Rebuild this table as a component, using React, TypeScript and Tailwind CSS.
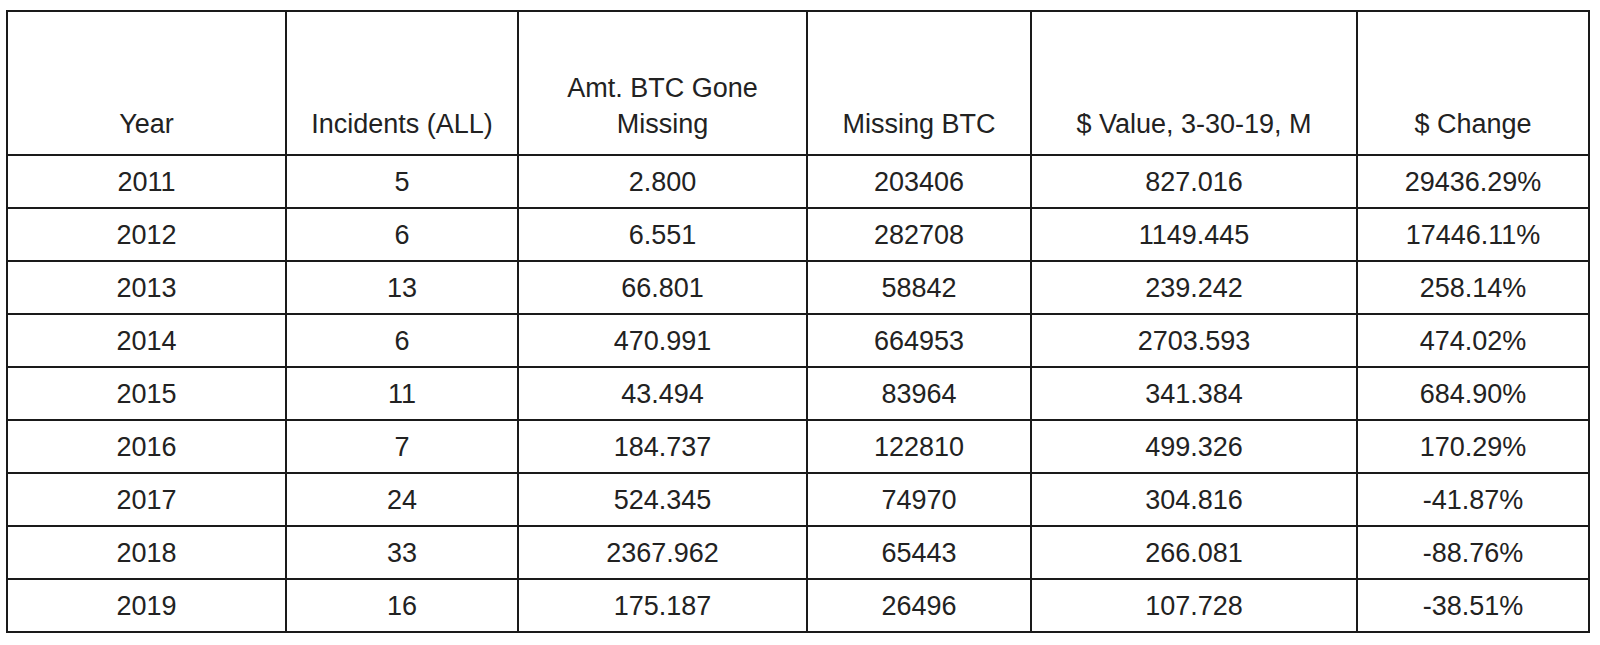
import React from 'react'

const headers = [
  'Year',
  'Incidents (ALL)',
  'Amt. BTC Gone Missing',
  'Missing BTC',
  '$ Value, 3-30-19, M',
  '$ Change',
]

const widths = ['w-[279px]', 'w-[232px]', 'w-[289px]', 'w-[224px]', 'w-[326px]', 'w-[232px]']

const rows = [
  ['2011', '5', '2.800', '203406', '827.016', '29436.29%'],
  ['2012', '6', '6.551', '282708', '1149.445', '17446.11%'],
  ['2013', '13', '66.801', '58842', '239.242', '258.14%'],
  ['2014', '6', '470.991', '664953', '2703.593', '474.02%'],
  ['2015', '11', '43.494', '83964', '341.384', '684.90%'],
  ['2016', '7', '184.737', '122810', '499.326', '170.29%'],
  ['2017', '24', '524.345', '74970', '304.816', '-41.87%'],
  ['2018', '33', '2367.962', '65443', '266.081', '-88.76%'],
  ['2019', '16', '175.187', '26496', '107.728', '-38.51%'],
]

const App = () => {
  return (
    <div className="w-[1600px] h-[645px] bg-white pl-[6px] pt-[10px] font-['Liberation_Sans',Arial,sans-serif] text-[27px] text-[#222]">
      <table className="border-collapse table-fixed w-[1584px]">
        <colgroup>
          {widths.map((w, i) => (
            <col key={i} className={w} />
          ))}
        </colgroup>
        <thead>
          <tr className="h-[144px]">
            {headers.map((h) => (
              <th
                key={h}
                className="border-2 border-[#1a1a1a] align-bottom font-normal leading-[36px] px-2 pb-3 text-center"
              >
                {h}
              </th>
            ))}
          </tr>
        </thead>
        <tbody>
          {rows.map((r) => (
            <tr key={r[0]} className="h-[53px]">
              {r.map((c, i) => (
                <td
                  key={i}
                  className="border-2 border-[#1a1a1a] text-center align-middle leading-[32px] p-0"
                >
                  {c}
                </td>
              ))}
            </tr>
          ))}
        </tbody>
      </table>
    </div>
  )
}

export default App
